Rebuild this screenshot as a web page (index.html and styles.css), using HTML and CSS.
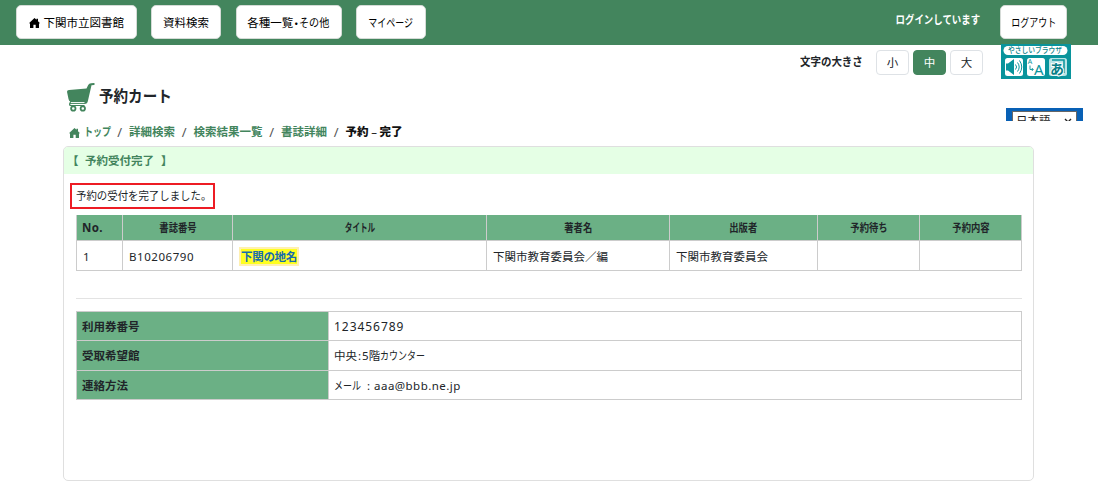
FILE: index.html
```html
<!DOCTYPE html>
<html lang="ja">
<head>
<meta charset="utf-8">
<title>予約カート</title>
<link rel="stylesheet" href="styles.css">
</head>
<body>
<header class="navbar">
  <nav class="menu">
    <a class="btn home"><svg class="house" viewBox="0 0 11 10"><path d="M5.5 0 7.5 1.8V.8H9V3.2L10.8 5 10 5.8V10H6.7V6.7H4.4V10H1V5.8L.2 5Z"/></svg><span>下関市立図書館</span></a>
    <a class="btn search">資料検索</a>
    <a class="btn lists"><span>各種一覧</span><span class="dot">・</span><span>その他</span></a>
    <a class="btn mypage"><span class="narrow">マイページ</span></a>
  </nav>
  <div class="account"><span class="status narrow">ログインしています</span><a class="btn logout"><span class="narrow">ログアウト</span></a></div>
</header>
<div class="tools">
  <span class="size-label">文字の大きさ</span>
  <div class="sizes"><a class="size">小</a><a class="size active">中</a><a class="size">大</a></div>
  <svg class="reader" viewBox="0 0 70 35">
    <rect width="70" height="35" fill="#09949c"/>
    <rect x="2.5" y="2" width="64" height="9" rx="4.5" fill="#fff"/>
    <text x="7" y="9.4" textLength="54" lengthAdjust="spacingAndGlyphs" font-size="7.5" font-weight="500" fill="#087f88">やさしいブラウザ</text>
    <rect x="4" y="14" width="18" height="18" rx="2.5" fill="#fff"/>
    <rect x="26" y="14" width="18" height="18" rx="2.5" fill="#fff"/>
    <rect x="48" y="14" width="18" height="18" rx="2.5" fill="#b9e4e6"/>
    <path d="M5 19.5H7L13 15V31L7 26.5H5Z" fill="#09949c"/>
    <path d="M14.5 20.5q2.2 2.5 0 5M16.5 18.5q3.4 4.5 0 9M18.5 16.5q4.5 6.5 0 13" fill="none" stroke="#09949c"/>
    <text x="26.8" y="20.2" font-size="7" fill="#09949c">A</text><text x="33" y="31" font-size="15" fill="#09949c">A</text>
    <path d="M29 21.5V25.5H32M30.8 24 32.3 25.5 30.8 27" fill="none" stroke="#09949c" stroke-width=".9"/>
    <path d="M51 16H63V29" fill="none" stroke="#09949c" stroke-width="1.5"/>
    <text x="49" y="29.5" font-size="14" font-weight="700" fill="#087f88" stroke="#fff" stroke-width="2" paint-order="stroke">あ</text>
  </svg>
</div>
<div class="heading">
  <svg class="cart" viewBox="0 0 28 30"><path d="M0 8.7Q0 7 2 6.9L19.5 5.5 21.2 2Q22 .2 24 .2L27 0Q28.5 1 27 2L24.5 2.2 21 17.5Q20.5 21 17.5 21H4.5Q3 21 3.2 21.9H17.5V23H3Q1.5 22.5 2.3 20L3.2 18.5Q2 18 1.5 16Z" fill="#43855d"/><path d="M3.8 19.6H17.5" stroke="#fff" stroke-width="1"/><g fill="#fff" stroke="#43855d" stroke-width="1.8"><circle cx="6.3" cy="25.5" r="2.2"/><circle cx="15.8" cy="25.5" r="2.2"/></g></svg>
  <h1>予約カート</h1>
  <div class="language"><div class="select"><span>日本語</span><svg viewBox="0 0 8 5"><path d="M1 1 4 4 7 1" fill="none" stroke="#222" stroke-width="1.4"/></svg></div></div>
</div>
<nav class="crumbs">
  <svg class="house" viewBox="0 0 11 10"><path d="M5.5 0 7.5 1.8V.8H9V3.2L10.8 5 10 5.8V10H6.7V6.7H4.4V10H1V5.8L.2 5Z"/></svg>
  <a class="top"><span class="narrow">トップ</span></a><i>/</i><a>詳細検索</a><i>/</i><a>検索結果一覧</a><i>/</i><a>書誌詳細</a><i>/</i><b>予約<span class="dash">–</span>完了</b>
</nav>
<main class="card">
  <h2><span class="bl">【</span><span>予約受付完了</span><span class="br">】</span></h2>
  <div class="body">
    <p class="message"><span>予約の受付を完了しました。</span></p>
    <div class="items">
      <div class="th first">No.</div><div class="th"><span>書誌番号</span></div><div class="th katakana"><span>タイトル</span></div><div class="th"><span>著者名</span></div><div class="th"><span>出版者</span></div><div class="th"><span>予約待ち</span></div><div class="th"><span>予約内容</span></div>
      <div class="td">1</div><div class="td code">B10206790</div><div class="td"><mark>下関の地名</mark></div><div class="td">下関市教育委員会／編</div><div class="td">下関市教育委員会</div><div class="td"></div><div class="td"></div>
    </div>
    <hr>
    <div class="details">
      <div class="label">利用券番号</div><div class="value number">123456789</div>
      <div class="label">受取希望館</div><div class="value">中央<span class="colon">:</span>5階<span class="counter narrow">カウンター</span></div>
      <div class="label">連絡方法</div><div class="value"><span class="mail narrow">メール</span><span class="sep">:</span><span class="address">aaa@bbb.ne.jp</span></div>
    </div>
  </div>
</main>
</body>
</html>
```
FILE: styles.css
```css
* { box-sizing: border-box; }
body { margin: 0; height: 481px; overflow: hidden; background: #fff; color: #212529; font: 11.5px/16px "Noto Sans", "Noto Sans CJK JP", sans-serif; white-space: nowrap; }
h1, h2, p { margin: 0; }
.narrow { display: inline-block; transform: scaleX(.78); transform-origin: center; }
.navbar { height: 44.5px; background: #43855d; display: flex; justify-content: space-between; padding: 5px 31px 0 16px; }
.menu { display: flex; gap: 14.5px; }
.btn { height: 34px; display: flex; align-items: center; justify-content: center; background: #fff; border: 1px solid #d5dbd7; border-radius: 5px; color: #000; padding-top: 2px; }
.home { width: 120.5px; gap: 4px; }
.house { width: 11px; height: 10px; fill: currentColor; }
.search { width: 70px; }
.lists { width: 106px; }
.dot { width: 6px; display: flex; justify-content: center; font-family: "Noto Sans CJK JP", sans-serif; font-feature-settings: "halt"; }
.lists span:last-child { transform: scaleX(.88); transform-origin: left; margin-right: -4px; }
.mypage { width: 70px; }
.account { display: flex; gap: 20px; }
.status { color: #fff; font-weight: 700; padding-top: 7px; transform: scaleX(.82); transform-origin: right; }
.logout { width: 67px; }
.tools { height: 36px; display: flex; padding-left: 800px; }
.size-label { width: 76px; padding-top: 9px; font-weight: 700; transform: scaleX(.91); transform-origin: left; }
.sizes { display: flex; gap: 4px; padding-top: 5px; width: 125px; }
.size { width: 33px; height: 25px; border: 1px solid #dee2e6; border-radius: 4px; display: flex; align-items: center; justify-content: center; padding-top: 1px; }
.active { background: #43855d; border-color: #43855d; color: #fff; }
.reader { width: 70px; height: 35px; margin-top: -.5px; }
.heading { height: 41px; padding-left: 67px; display: flex; }
.cart { width: 28px; height: 30px; margin-top: 2.5px; }
h1 { margin-left: 4px; width: 907px; font-size: 16px; line-height: 24px; padding-top: 3px; transform: scaleX(.91); transform-origin: left; }
.language { width: 77px; height: 13.5px; margin-top: 27px; background: #0860b5; padding: 3px 6px 0; overflow: hidden; }
.select { height: 20px; background: #fff; border: 1px solid #666; display: flex; align-items: flex-start; justify-content: space-between; padding: 1px 4px 0 3px; line-height: 16px; color: #222; }
.select svg { width: 8px; height: 5px; margin-top: 5px; }
.crumbs { height: 24px; padding: 2px 0 0 69px; display: flex; color: #43855d; font-weight: 700; line-height: 16px; }
.crumbs .house { margin: 4px 4px 0 0; }
.crumbs i { width: 18.5px; text-align: center; color: #555; font-style: normal; font-size: 13px; font-weight: 400; }
.crumbs b { color: #111; }
.top { width: 26.5px; }
.top .narrow { transform-origin: left; }
.dash { display: inline-block; width: 11px; text-align: center; font-weight: 400; }
.card { margin-left: 63px; width: 971px; height: 335px; border: 1.5px solid #dfdfdf; border-radius: 5px; overflow: hidden; }
h2 { height: 27.5px; background: #e5ffe5; color: #43855d; font-size: 11.5px; line-height: 28px; padding-left: 3px; display: flex; }
.bl { width: 18px; }
.br { margin-left: 7px; }
.body { padding: 9px 11px 0 12px; }
.message { margin-left: -6px; width: 145px; height: 26px; border: 2px solid #ed1c24; padding-left: 4px; line-height: 22px; }
.message span { display: inline-block; transform: scaleX(.905); transform-origin: left; }
.items { margin-top: 6px; display: grid; grid-template-columns: 46px 110px 254px 183px 148px 102px 102px; grid-template-rows: 26px 30px; border-left: 1px solid #ccc; }
.th, .td, .label, .value { border-right: 1px solid #ccc; border-bottom: 1px solid #ccc; }
.th { background: #6bb085; font-weight: 700; text-align: center; line-height: 25px; }
.th span { display: inline-block; transform: scaleX(.81); }
.th.katakana span { transform: scaleX(.66); }
.first { text-align: left; padding-left: 5px; letter-spacing: .4px; }
.td { padding-left: 6px; line-height: 31px; }
.code { letter-spacing: .55px; }
mark { display: inline-block; line-height: 15px; background: #ffff20; outline: 2px solid #fff0b0; color: #176cae; font-weight: 700; margin-left: 2px; letter-spacing: -.3px; }
hr { margin: 27px 0 11.5px; border: 0; border-top: 1px solid #e3e3e3; }
.details { display: grid; grid-template-columns: 252px 693px; grid-template-rows: 29.5px 29.5px 29.5px; border: solid #ccc; border-width: 1px 0 0 1px; }
.label { background: #6bb085; font-weight: 700; padding-left: 5px; line-height: 29px; }
.value { padding-left: 5px; line-height: 29px; }
.number { font-size: 12px; letter-spacing: .95px; }
.colon { margin: 0 1px; }
.counter, .mail { transform-origin: left; }
.mail { width: 27px; }
.sep { margin: 0 4px 0 6px; }
.address { letter-spacing: .45px; }
```
